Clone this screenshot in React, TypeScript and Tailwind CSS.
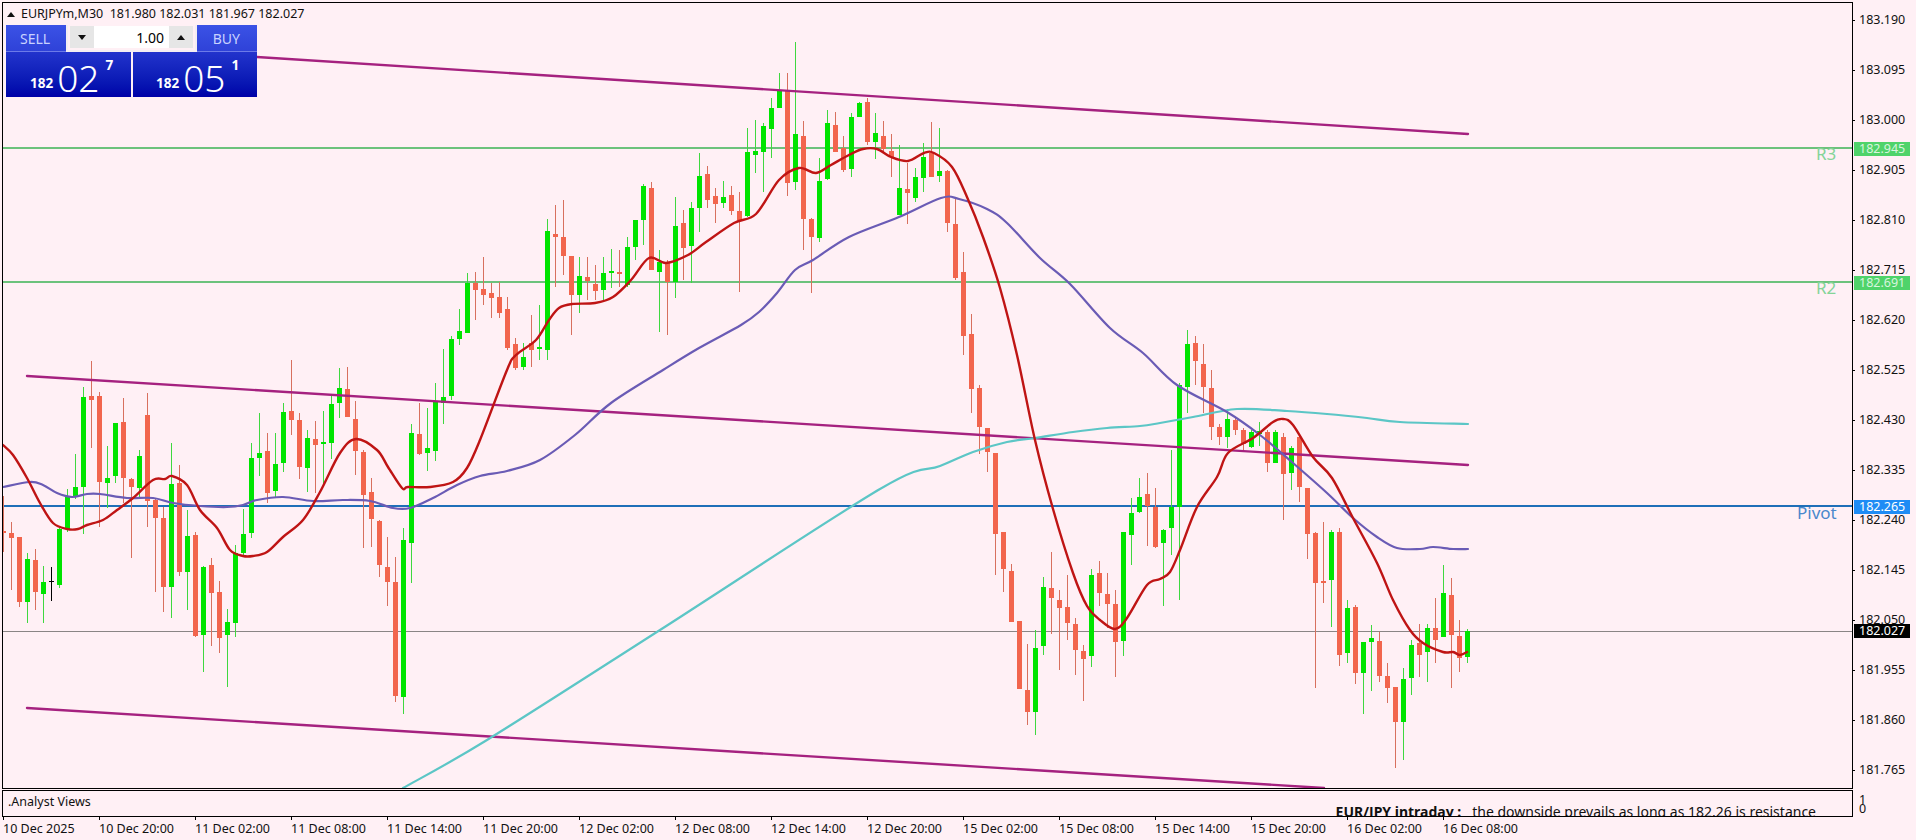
const candles: [string, number, number, number, number][] = [
  ["R",496,531,533,552],["R",522,533,538,590],["R",537,537,602,607],["G",553,559,602,623],["R",549,560,592,610],
  ["G",566,582,594,623],["K",567,581,582,601],["G",528,529,585,588],["G",489,497,529,532],["G",454,487,497,499],
  ["G",387,397,487,534],["R",361,396,400,448],["R",392,396,482,527],["G",446,478,483,508],["G",423,423,476,483],
  ["R",398,422,478,503],["R",478,479,487,558],["G",450,456,488,497],["R",393,415,501,527],["R",498,500,518,592],
  ["R",507,518,587,612],["G",443,484,587,618],["R",465,483,572,576],["G",510,536,572,610],["R",532,535,636,637],
  ["G",566,567,635,672],["R",558,565,593,646],["R",581,592,638,653],["G",609,622,635,687],["G",545,553,623,637],
  ["G",509,534,553,555],["G",443,458,533,538],["G",413,453,458,476],["R",433,451,493,503],["G",433,464,491,497],
  ["G",403,412,463,472],["R",360,411,420,435],["R",413,420,467,479],["G",430,438,468,492],["R",421,439,445,493],
  ["G",411,442,443,487],["G",395,404,443,459],["G",368,388,403,418],["R",367,389,417,417],["R",401,419,451,475],
  ["R",450,452,495,548],["R",478,492,519,547],["R",520,521,565,577],["R",537,567,582,606],["R",557,582,696,702],
  ["G",528,540,697,714],["G",424,433,543,583],["R",403,434,454,455],["G",408,448,453,471],["G",383,402,451,461],
  ["G",349,397,403,424],["G",336,339,396,400],["G",309,331,339,345],["G",273,283,333,333],["R",272,283,290,320],
  ["R",257,289,295,305],["R",283,293,298,318],["R",282,297,313,318],["R",297,309,348,350],["R",338,344,368,370],
  ["G",343,357,367,370],["R",315,343,350,367],["G",305,347,349,360],["G",219,231,350,360],["R",205,234,237,287],
  ["R",200,237,256,275],["R",256,256,295,335],["G",257,276,295,313],["R",257,277,281,300],["R",265,284,291,300],
  ["G",257,273,290,300],["G",249,271,273,288],["R",250,272,274,287],["G",237,247,285,287],["G",220,220,247,260],
  ["G",184,186,220,245],["R",182,188,270,270],["G",250,262,272,332],["R",260,262,282,335],["G",197,226,282,298],
  ["R",210,223,248,280],["G",202,208,246,283],["G",153,176,208,232],["R",166,174,200,208],["R",188,196,204,223],
  ["G",181,197,203,208],["R",186,195,211,215],["R",192,211,220,292],["G",128,152,216,217],["G",120,151,155,173],
  ["G",123,126,152,192],["G",98,108,129,158],["G",73,91,108,108],["R",73,91,183,196],["G",42,134,182,190],
  ["R",121,136,219,250],["R",218,219,237,293],["G",158,181,238,242],["G",110,123,179,180],["R",112,125,152,152],
  ["R",136,148,170,172],["G",113,117,169,177],["G",102,103,117,117],["R",98,102,142,145],["G",113,133,142,159],
  ["R",121,136,149,152],["R",134,151,157,177],["G",145,188,215,215],["R",163,189,193,224],["G",168,177,198,202],
  ["G",143,157,178,192],["R",122,153,177,177],["G",128,171,176,182],["R",170,171,223,232],["R",198,224,278,280],
  ["R",252,272,336,355],["R",314,334,389,413],["R",385,388,427,454],["R",428,428,452,472],["R",453,453,534,575],
  ["R",532,532,569,592],["R",564,571,622,622],["R",621,621,689,689],["R",644,690,712,725],["G",630,648,712,735],
  ["G",577,587,646,655],["R",552,588,598,634],["R",590,600,608,670],["R",575,607,623,640],["R",618,624,650,675],
  ["R",645,651,659,701],["G",569,575,656,667],["R",561,573,593,606],["R",573,594,604,628],["R",590,604,642,677],
  ["G",532,532,641,656],["G",498,513,535,565],["G",478,497,512,513],["R",473,494,506,546],["R",488,507,547,548],
  ["G",529,530,543,606],["G",450,507,528,555],["G",383,385,507,600],["G",330,344,387,413],["R",336,343,361,385],
  ["R",344,364,387,413],["R",370,388,427,440],["R",424,427,437,445],["G",409,419,437,448],["R",418,420,430,435],
  ["R",428,430,444,450],["G",430,432,447,448],["G",422,431,434,446],["R",430,432,463,472],["G",430,432,463,463],
  ["R",433,437,474,520],["G",446,448,473,490],["R",434,437,487,502],["R",488,488,534,559],["R",532,533,583,688],
  ["R",522,581,583,603],["G",530,532,580,627],["R",528,532,655,666],["G",600,608,653,663],["R",605,607,673,684],
  ["G",642,642,673,714],["G",625,638,642,691],["R",632,641,676,682],["R",663,676,688,703],["R",687,687,722,768],
  ["G",668,679,722,760],["G",640,645,678,695],["R",624,643,655,677],["G",624,628,652,682],["R",598,628,640,663],
  ["G",565,593,637,637],["R",578,595,635,688],["R",620,636,658,672],["G",629,631,657,663],
];

const redLine = [[3,445],[13,455],[27,478],[40,503],[53,523],[67,529],[78,529],[87,525],[103,520],[117,510],[133,498],[153,480],[165,479],[172,476],[187,485],[200,510],[217,528],[230,550],[243,556],[253,556],[267,552],[283,537],[303,520],[320,492],[340,453],[356,439],[377,450],[388,467],[402,488],[408,487],[430,487],[453,482],[467,468],[480,440],[507,370],[516,355],[536,340],[549,320],[559,308],[572,304],[595,303],[613,297],[631,280],[649,258],[666,263],[688,255],[706,242],[734,223],[756,214],[779,180],[799,168],[816,173],[831,165],[849,155],[863,149],[877,149],[891,157],[908,161],[924,153],[934,153],[952,167],[967,197],[983,237],[1000,288],[1017,355],[1035,440],[1053,509],[1073,573],[1087,606],[1100,620],[1115,629],[1127,618],[1147,585],[1160,579],[1170,572],[1180,550],[1197,507],[1217,477],[1228,453],[1253,438],[1273,422],[1283,419],[1293,425],[1313,457],[1332,478],[1353,518],[1377,563],[1393,600],[1410,630],[1423,643],[1443,652],[1453,652],[1460,655],[1467,652]];
const blueLine = [[3,487],[30,482],[43,485],[57,493],[72,497],[87,494],[100,494],[127,498],[153,498],[173,503],[200,506],[227,507],[243,505],[257,500],[283,497],[313,501],[343,500],[370,501],[393,508],[410,508],[433,498],[457,485],[480,476],[507,471],[540,460],[575,435],[611,403],[663,370],[699,348],[741,325],[759,312],[777,293],[795,270],[813,260],[849,237],[899,217],[941,198],[959,199],[987,209],[1007,223],[1040,258],[1070,284],[1110,328],[1143,353],[1177,385],[1227,412],[1260,435],[1293,463],[1327,493],[1353,518],[1377,537],[1397,548],[1420,549],[1433,547],[1453,549],[1468,549]];
const cyanLine = [[403,788],[487,740],[660,630],[880,489],[940,466],[973,452],[1007,442],[1035,438],[1073,432],[1107,428],[1140,426],[1160,423],[1193,417],[1237,409],[1287,411],[1327,414],[1367,418],[1400,422],[1468,424]];

const priceLabels = ["183.190","183.095","183.000","182.905","182.810","182.715","182.620","182.525","182.430","182.335","182.240","182.145","182.050","181.955","181.860","181.765"];
const timeLabels = ["10 Dec 2025","10 Dec 20:00","11 Dec 02:00","11 Dec 08:00","11 Dec 14:00","11 Dec 20:00","12 Dec 02:00","12 Dec 08:00","12 Dec 14:00","12 Dec 20:00","15 Dec 02:00","15 Dec 08:00","15 Dec 14:00","15 Dec 20:00","16 Dec 02:00","16 Dec 08:00"];

// catmull-rom through the sampled points so the averages don't look faceted
function smooth(p: number[][]) {
  let d = `M${p[0][0]} ${p[0][1]}`;
  for (let i = 0; i < p.length - 1; i++) {
    const a = p[i - 1] || p[i], b = p[i], c = p[i + 1], e = p[i + 2] || c;
    d += `C${b[0] + (c[0] - a[0]) / 6} ${b[1] + (c[1] - a[1]) / 6} ${c[0] - (e[0] - b[0]) / 6} ${c[1] - (e[1] - b[1]) / 6} ${c[0]} ${c[1]}`;
  }
  return d;
}

function Chart() {
  return (
    <svg viewBox="3 3 1849 785" className="w-[1849px] h-[785px] block">
      <g shapeRendering="crispEdges">
        <rect x="3" y="147" width="1849" height="2" fill="#6cc27c" />
        <rect x="3" y="281" width="1849" height="2" fill="#6cc27c" />
        <rect x="3" y="505" width="1849" height="2" fill="#1f6fb8" />
        <rect x="3" y="631" width="1849" height="1" fill="#8a8585" />
      </g>
      <g shapeRendering="crispEdges">
        {candles.map(([c, hi, top, bot, lo], i) => {
          const body = c === "G" ? "#00e400" : c === "R" ? "#f2654d" : "#000000";
          const wick = c === "G" ? "#3fd83f" : c === "R" ? "#d8705e" : "#000000";
          const x = 3 + 8 * i;
          return (
            <g key={i}>
              <rect x={x} y={hi} width="1" height={lo - hi} fill={wick} />
              {c === "K" ? (
                <rect x={x - 2} y={top} width="5" height="1" fill={body} />
              ) : (
                <rect x={x - 2} y={top} width="5" height={Math.max(bot - top, 2)} fill={body} />
              )}
            </g>
          );
        })}
      </g>
      <g fill="none" strokeLinecap="round" strokeLinejoin="round">
        <path d="M257 57L1468 134" stroke="#a5217f" strokeWidth="2.4" />
        <path d="M27 376L1468 465" stroke="#a5217f" strokeWidth="2.4" />
        <path d="M27 708L1324 788" stroke="#a5217f" strokeWidth="2.4" />
        <path d={smooth(cyanLine)} stroke="#5cc6c6" strokeWidth="2.2" />
        <path d={smooth(blueLine)} stroke="#6a5bb5" strokeWidth="2.2" />
        <path d={smooth(redLine)} stroke="#bf1414" strokeWidth="2.4" />
      </g>
    </svg>
  );
}

function TradePanel() {
  return (
    <div className="absolute left-[3px] top-[22px] w-[251px] h-[72px] flex gap-[2px] text-white">
      <div className="w-[125px] flex flex-col">
        <div className="h-[27px] flex items-center pl-[14px] text-[14px] text-[#c9d2ff] border-b border-[#6c7ae8] bg-gradient-to-b from-[#3b52e6] to-[#2f42d8]">SELL</div>
        <div className="flex-1 flex items-start pl-[24px] bg-gradient-to-b from-[#2233cc] to-[#0000a8]">
          <span className="text-[13.5px] font-bold mt-[21px]">182</span>
          <span className="text-[37px] leading-[37px] font-light ml-[4px] mt-[7px]">02</span>
          <span className="text-[13.5px] font-bold ml-[6px] mt-[3px]">7</span>
        </div>
      </div>
      <div className="w-[124px] flex flex-col">
        <div className="h-[27px] flex items-center justify-end pr-[17px] text-[14px] text-[#c9d2ff] border-b border-[#6c7ae8] bg-gradient-to-b from-[#3b52e6] to-[#2f42d8]">BUY</div>
        <div className="flex-1 flex items-start pl-[23px] bg-gradient-to-b from-[#2233cc] to-[#0000a8]">
          <span className="text-[13.5px] font-bold mt-[21px]">182</span>
          <span className="text-[37px] leading-[37px] font-light ml-[4px] mt-[7px]">05</span>
          <span className="text-[13.5px] font-bold ml-[6px] mt-[3px]">1</span>
        </div>
      </div>
      <div className="absolute left-[60px] top-0 w-[131px] h-[27px] bg-[#fff0f5] p-[2px] pt-[1px] flex border-b-[2px] border-x-[2px] border-[#f4eef2]">
        <div className="w-[24px] bg-[#e6e6e6] flex items-center justify-center">
          <svg width="8" height="5" viewBox="0 0 8 5"><path d="M0 0h8L4 5z" fill="#111" /></svg>
        </div>
        <div className="flex-1 bg-white text-black text-right pr-[5px] text-[14px] leading-[24px]">1.00</div>
        <div className="w-[24px] bg-[#e6e6e6] flex items-center justify-center">
          <svg width="8" height="5" viewBox="0 0 8 5"><path d="M0 5h8L4 0z" fill="#111" /></svg>
        </div>
      </div>
    </div>
  );
}

export default function App() {
  return (
    <div className="relative w-[1916px] h-[840px] overflow-hidden bg-[#fff0f5] text-[#111] text-[12.5px] font-['Noto_Sans',sans-serif]">
      <div className="flex h-[817px] pl-[2px] pt-[2px]">
        <div className="w-[1851px] flex flex-col">
          <div className="relative h-[787px] border border-black overflow-hidden">
            <Chart />
            <div className="absolute left-[4px] top-[3px] flex items-center gap-[6px] leading-[16px] whitespace-pre">
              <svg width="8" height="5" viewBox="0 0 8 5"><path d="M0 5h8L4 0z" fill="#111" /></svg>
              <span>EURJPYm,M30  181.980 182.031 181.967 182.027</span>
            </div>
            <TradePanel />
            <div className="absolute left-[1813px] top-[141px] text-[17px] leading-[20px] text-[#84d498]">R3</div>
            <div className="absolute left-[1813px] top-[275px] text-[17px] leading-[20px] text-[#84d498]">R2</div>
            <div className="absolute left-[1794px] top-[500px] text-[17px] leading-[20px] text-[#4a88cc]">Pivot</div>
          </div>
          <div className="mt-px h-[27px] border border-black flex justify-between overflow-hidden whitespace-pre">
            <span className="ml-[5px] mt-[3px] leading-[16px]">.Analyst Views</span>
            <span className="mr-[36px] mt-[13px] leading-[16px] text-[14px]">
              <b>EUR/JPY intraday :</b>   the downside prevails as long as 182.26 is resistance
            </span>
          </div>
        </div>
        <div className="relative flex-1">
          <div className="-mt-[7px] flex flex-col">
            {priceLabels.map((p) => (
              <div key={p} className="h-[50px] flex items-center">
                <div className="w-[2px] h-px bg-black" />
                <span className="ml-[4px] leading-[14px]">{p}</span>
              </div>
            ))}
            <div className="ml-[6px] h-[9px] leading-[9px]">1</div>
            <div className="ml-[6px] h-[9px] leading-[9px]">0</div>
          </div>
          <div className="absolute left-[1px] top-[140px] w-[56px] h-[14px] bg-[#4fd36a] text-[#d8f5de] pl-[5px] leading-[14px]">182.945</div>
          <div className="absolute left-[1px] top-[274px] w-[56px] h-[14px] bg-[#4fd36a] text-[#d8f5de] pl-[5px] leading-[14px]">182.691</div>
          <div className="absolute left-[1px] top-[498px] w-[56px] h-[14px] bg-[#1e8cf5] text-white pl-[5px] leading-[14px]">182.265</div>
          <div className="absolute left-[1px] top-[622px] w-[56px] h-[14px] bg-black text-white pl-[5px] leading-[14px]">182.027</div>
        </div>
      </div>
      <div className="flex pl-[3px]">
        {timeLabels.map((t) => (
          <div key={t} className="w-[96px] shrink-0 flex flex-col items-start">
            <div className="w-px h-[3px] bg-black" />
            <span className="leading-[16px] mt-[1px] whitespace-pre">{t}</span>
          </div>
        ))}
      </div>
    </div>
  );
}
